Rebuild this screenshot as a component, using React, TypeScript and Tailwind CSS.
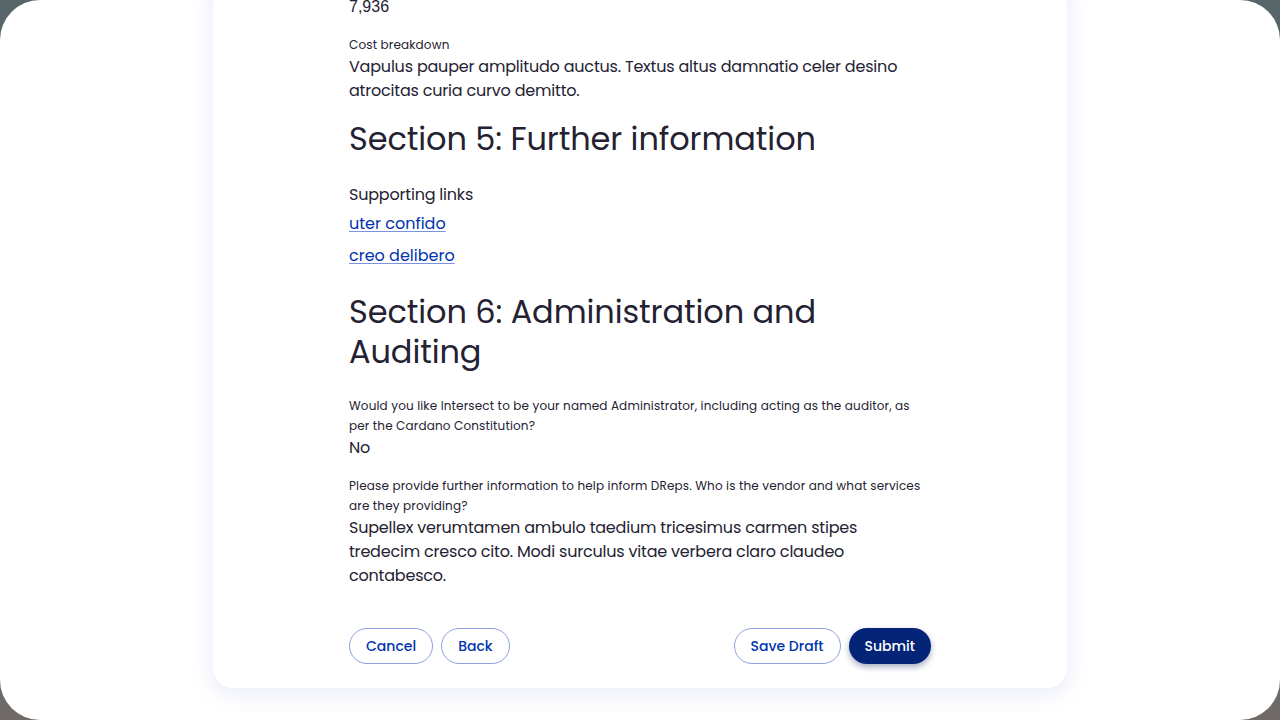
const FONT = "font-['Poppins','Open_Sans',sans-serif]";

function Label({ children }: { children: React.ReactNode }) {
  return <div className="text-[12px] leading-[20px] tracking-[0.15px] text-[#242232]">{children}</div>;
}

function Body({ children }: { children: React.ReactNode }) {
  return <div className="text-[16px] leading-[24px] tracking-[-0.2px] text-[#242232]">{children}</div>;
}

function Heading({ children }: { children: React.ReactNode }) {
  return <h2 className="text-[32px] leading-[40px] font-normal tracking-[-0.1px] text-[#242232]">{children}</h2>;
}

const outlined =
  "h-9 rounded-full border border-[#8da0e0] px-4 text-[14px] font-medium text-[#0033ad]";

export default function App() {
  return (
    <div className="h-screen w-full overflow-hidden bg-gradient-to-b from-[#566669] to-[#6f6a67]">
      <div className={`h-full w-full overflow-hidden rounded-[40px] bg-white ${FONT}`}>
        <div className="mx-auto -mt-[30px] w-[854px] rounded-[20px] bg-white px-[136px] pb-6 pt-[25px] shadow-[0_4px_24px_rgba(60,80,210,0.13)]">
          <div className="font-['Liberation_Sans',sans-serif] text-[16px] leading-[24px] text-[#242232]">7,936</div>

          <div className="mt-4">
            <Label>Cost breakdown</Label>
            <Body>
              Vapulus pauper amplitudo auctus. Textus altus damnatio celer desino atrocitas curia curvo demitto.
            </Body>
          </div>

          <div className="mt-4">
            <Heading>Section 5: Further information</Heading>
          </div>

          <div className="mt-6">
            <Body>Supporting links</Body>
            <div className="mt-[5px] flex flex-col gap-2">
              <a href="#" className="text-[16px] leading-[24px] text-[#0033ad] underline underline-offset-2 decoration-[#7d93de]">
                uter confido
              </a>
              <a href="#" className="text-[16px] leading-[24px] text-[#0033ad] underline underline-offset-2 decoration-[#7d93de]">
                creo delibero
              </a>
            </div>
          </div>

          <div className="mt-6">
            <Heading>Section 6: Administration and Auditing</Heading>
          </div>

          <div className="mt-6">
            <Label>
              Would you like Intersect to be your named Administrator, including acting as the auditor, as per the Cardano
              Constitution?
            </Label>
            <Body>No</Body>
          </div>

          <div className="mt-4">
            <Label>
              Please provide further information to help inform DReps. Who is the vendor and what services are they
              providing?
            </Label>
            <Body>
              Supellex verumtamen ambulo taedium tricesimus carmen stipes tredecim cresco cito. Modi surculus vitae verbera
              claro claudeo contabesco.
            </Body>
          </div>

          <div className="mt-10 flex items-center justify-between">
            <div className="flex gap-2">
              <button className={outlined}>Cancel</button>
              <button className={outlined}>Back</button>
            </div>
            <div className="flex gap-2">
              <button className={outlined}>Save Draft</button>
              <button className="h-9 rounded-full bg-[#042478] px-4 text-[14px] font-medium text-white shadow-[0_3px_6px_rgba(0,20,80,0.35)]">
                Submit
              </button>
            </div>
          </div>
        </div>
      </div>
    </div>
  );
}
